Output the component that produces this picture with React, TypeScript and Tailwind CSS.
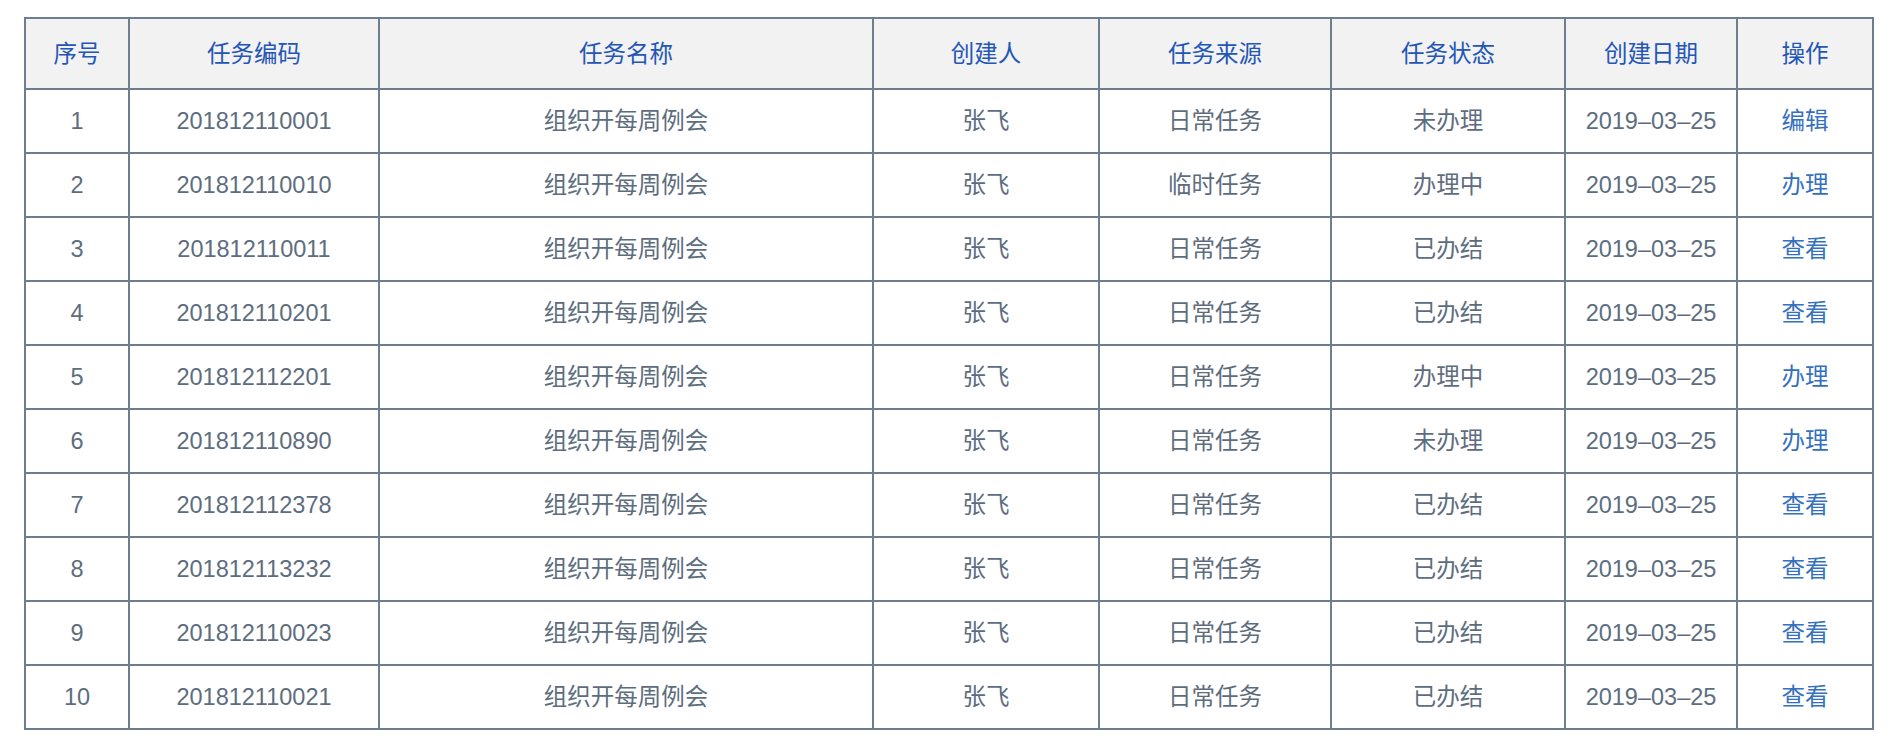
const columns = [
  { title: "序号", width: "w-[104px]" },
  { title: "任务编码", width: "w-[250px]" },
  { title: "任务名称", width: "w-[494px]" },
  { title: "创建人", width: "w-[226px]" },
  { title: "任务来源", width: "w-[232px]" },
  { title: "任务状态", width: "w-[234px]" },
  { title: "创建日期", width: "w-[172px]" },
  { title: "操作", width: "w-[136px]" },
];

const rows = [
  { code: "201812110001", source: "日常任务", status: "未办理", action: "编辑" },
  { code: "201812110010", source: "临时任务", status: "办理中", action: "办理" },
  { code: "201812110011", source: "日常任务", status: "已办结", action: "查看" },
  { code: "201812110201", source: "日常任务", status: "已办结", action: "查看" },
  { code: "201812112201", source: "日常任务", status: "办理中", action: "办理" },
  { code: "201812110890", source: "日常任务", status: "未办理", action: "办理" },
  { code: "201812112378", source: "日常任务", status: "已办结", action: "查看" },
  { code: "201812113232", source: "日常任务", status: "已办结", action: "查看" },
  { code: "201812110023", source: "日常任务", status: "已办结", action: "查看" },
  { code: "201812110021", source: "日常任务", status: "已办结", action: "查看" },
];

export default function App() {
  const cell = "border-2 border-[#6e7e8f] pt-[2px] text-center align-middle";

  return (
    <div className="min-h-screen bg-white pl-[24px] pt-[17px] font-['Liberation_Sans','Noto_Sans_CJK_SC',sans-serif] text-[23.5px]">
      <table className="w-[1848px] table-fixed border-collapse">
        <colgroup>
          {columns.map((c) => (
            <col key={c.title} className={c.width} />
          ))}
        </colgroup>
        <thead>
          <tr className="bg-[#f2f2f2]">
            {columns.map((c) => (
              <th key={c.title} className={`${cell} h-[71px] font-normal text-[#2356b6]`}>
                {c.title}
              </th>
            ))}
          </tr>
        </thead>
        <tbody className="text-[#5d6d7e]">
          {rows.map((r, i) => (
            <tr key={r.code}>
              <td className={`${cell} h-[64px]`}>{i + 1}</td>
              <td className={cell}>{r.code}</td>
              <td className={cell}>组织开每周例会</td>
              <td className={cell}>张飞</td>
              <td className={cell}>{r.source}</td>
              <td className={cell}>{r.status}</td>
              <td className={cell}>2019–03–25</td>
              <td className={cell}>
                <a className="cursor-pointer text-[#3570c0]">{r.action}</a>
              </td>
            </tr>
          ))}
        </tbody>
      </table>
    </div>
  );
}
